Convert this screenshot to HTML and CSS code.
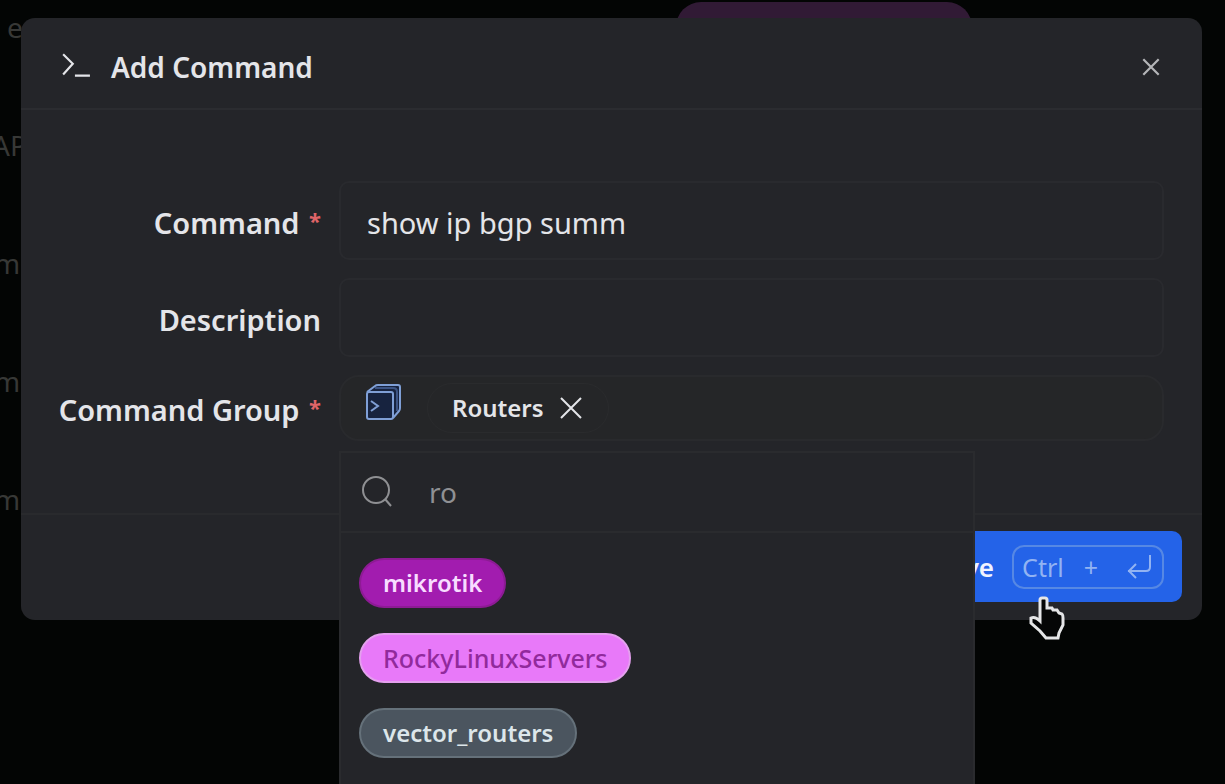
FILE: index.html
```html
<!DOCTYPE html>
<html lang="en">
<head>
<meta charset="utf-8">
<title>Add Command</title>
<link rel="stylesheet" href="styles.css">
</head>
<body>
<div class="backdrop" aria-hidden="true">
  <div class="backdrop-row"><span class="backdrop-text first">e</span><span class="backdrop-pill"></span></div>
  <div class="backdrop-row"><span class="backdrop-text api">AP</span></div>
  <div class="backdrop-row"><span class="backdrop-text">m</span></div>
  <div class="backdrop-row"><span class="backdrop-text">m</span></div>
  <div class="backdrop-row"><span class="backdrop-text">m</span></div>
</div>

<form class="modal" role="dialog" aria-labelledby="title">
  <header class="modal-header">
    <svg class="prompt-icon" viewBox="0 0 28 26" aria-hidden="true"><path d="M2 1l9 9-9 10M13 21h14"/></svg>
    <h1 class="modal-title" id="title">Add Command</h1>
    <button class="icon-button close" type="button" aria-label="Close">
      <svg class="close-icon" viewBox="0 0 20 20" aria-hidden="true"><path d="M3 3l14 14M17 3L3 17"/></svg>
    </button>
  </header>

  <div class="modal-body">
    <label class="label" for="command">Command <span class="required">*</span></label>
    <input class="input" id="command" type="text" value="show ip bgp summ">

    <label class="label" for="description">Description</label>
    <input class="input" id="description" type="text">

    <label class="label" for="search">Command Group <span class="required">*</span></label>
    <div class="group-field">
      <svg class="group-icon" viewBox="0 0 36 38" aria-hidden="true">
        <path class="group-back" d="M2 9l8-6q1-1 3-1h20q2 0 2 2v21q0 2-1 3l-6 7"/>
        <rect class="group-front" x="2" y="9" width="26" height="27" rx="2"/>
        <path class="group-edge" d="M10 5h18q4 0 4 4v19"/>
        <path d="M6 18l7 5-7 5"/>
      </svg>
      <span class="chip">Routers
        <button class="icon-button" type="button" aria-label="Remove Routers">
          <svg class="remove-icon" viewBox="0 0 22 22" aria-hidden="true"><path d="M1 1l20 20M21 1L1 21"/></svg>
        </button>
      </span>
      <div class="dropdown">
        <div class="search">
          <svg class="search-icon" viewBox="0 0 32 32" aria-hidden="true"><circle cx="15" cy="14" r="13"/><path d="M24 23l6 7"/></svg>
          <input class="search-input" id="search" type="text" value="ro">
        </div>
        <div class="options">
          <button class="option mikrotik" type="button">mikrotik</button>
          <button class="option rocky" type="button">RockyLinuxServers</button>
          <button class="option vector" type="button">vector_routers</button>
        </div>
      </div>
    </div>
  </div>

  <footer class="modal-footer">
    <button class="save" type="submit">Save
      <kbd class="shortcut"><span>Ctrl</span><span>+</span>
        <svg class="enter-icon" viewBox="0 0 26 26" aria-hidden="true"><path d="M24 1v12q0 4-4 4H2M10 10l-7 7 7 7"/></svg>
      </kbd>
    </button>
  </footer>
</form>

<svg class="cursor" viewBox="0 0 36 44" aria-hidden="true"><path d="M11 4q0-2 2-2h3q2 0 2 2v8h5l1 2h4l2 3 3 1q1 1 1 4v7l-4 8-1 5H17L11 35 2 27v-5q4-2 9 3z"/></svg>
</body>
</html>
```

FILE: styles.css
```css
* {
  box-sizing: border-box;
}

body {
  margin: 0;
  min-height: 100vh;
  padding: 18px 23px 0 21px;
  overflow: hidden;
  background: #030504;
  color: #e4e5e9;
  font: 28px/40px "Noto Sans", sans-serif;
}

button,
input,
kbd {
  margin: 0;
  font: inherit;
  color: inherit;
}

svg {
  display: block;
  flex: none;
  fill: none;
  stroke: currentColor;
  stroke-width: 2;
}

.backdrop {
  position: absolute;
  inset: -32px 0 auto 0;
  overflow: hidden;
  color: #373836;
}

.backdrop-row {
  display: flex;
  align-items: center;
  height: 118px;
}

.backdrop-text {
  width: 682px;
  margin-left: -6px;
}

.backdrop-text.first {
  padding-left: 13px;
}

.backdrop-text.api {
  margin-left: -8px;
}

.backdrop-pill {
  width: 296px;
  height: 50px;
  border-radius: 25px;
  background: #311a35;
}

.modal {
  position: relative;
  border-radius: 14px;
  background: #242529;
}

.modal-header {
  display: flex;
  align-items: center;
  gap: 20px;
  height: 92px;
  padding: 8px 40px 0;
  border-bottom: 2px solid #2b2c30;
}

.prompt-icon {
  width: 30px;
  height: 28px;
}

.modal-title {
  flex: 1;
  margin: 0;
  font-size: 28px;
  font-weight: 600;
}

.icon-button {
  padding: 0;
  border: 0;
  background: none;
}

.close {
  color: #b4b5b8;
}

.close-icon {
  width: 22px;
  height: 22px;
}

.modal-body {
  display: grid;
  grid-template-columns: 263px 1fr;
  gap: 18px;
  align-items: center;
  padding: 71px 38px 72px 37px;
}

.label {
  padding-top: 4px;
  font-size: 29px;
  font-weight: 600;
  text-align: right;
  white-space: nowrap;
}

.required {
  margin-left: 2px;
  color: #e06468;
  font-size: 22px;
  font-weight: 700;
  line-height: 20px;
  vertical-align: 5px;
}

.input {
  width: 100%;
  height: 79px;
  padding: 4px 26px 0;
  border: 2px solid #292a2e;
  border-radius: 10px;
  background: none;
  font-size: 29px;
}

.group-field {
  position: relative;
  display: flex;
  align-items: center;
  gap: 26px;
  height: 66px;
  padding: 0 24px;
  border: 2px solid #292a2d;
  border-radius: 20px;
  background: #252628;
}

.group-icon {
  align-self: flex-start;
  width: 36px;
  height: 38px;
  margin-top: 6px;
  color: #7f9fd6;
}

.group-back,
.group-front {
  fill: #17233f;
}

.group-edge {
  stroke: #3d5585;
}

.chip {
  display: flex;
  align-items: center;
  gap: 16px;
  height: 50px;
  padding: 0 26px 0 24px;
  border: 1px solid #2a2b2d;
  border-radius: 25px;
  font-size: 24px;
  font-weight: 600;
}

.remove-icon {
  width: 22px;
  height: 22px;
}

.dropdown {
  position: absolute;
  top: 74px;
  left: -2px;
  z-index: 2;
  width: 636px;
  min-height: 360px;
  border: 2px solid #2a2b2e;
  background: #242529;
}

.search {
  display: flex;
  align-items: center;
  gap: 36px;
  height: 80px;
  padding: 0 20px;
  border-bottom: 2px solid #2a2b2e;
  color: #8f9093;
}

.search-icon {
  width: 32px;
  height: 32px;
}

.search-input {
  flex: 1;
  padding: 0;
  border: 0;
  outline: 0;
  background: none;
}

.options {
  display: flex;
  flex-direction: column;
  align-items: flex-start;
  gap: 25px;
  padding: 25px 18px;
}

.option {
  height: 50px;
  padding: 0 22px;
  border: 2px solid;
  border-radius: 25px;
  font-size: 24px;
  line-height: 46px;
}

.mikrotik {
  border-color: #8d1b94;
  background: #a21caf;
  color: #f8dcff;
  font-weight: 600;
}

.rocky {
  border-color: #e4a0ee;
  background: #e879f9;
  color: #912a9c;
  font-size: 25px;
  font-weight: 500;
}

.vector {
  border-color: #65717a;
  background: #4b555f;
  color: #dce6ea;
  font-weight: 600;
}

.modal-footer {
  display: flex;
  justify-content: flex-end;
  padding: 16px 20px 18px;
  border-top: 2px solid #292a2d;
}

.save {
  display: flex;
  align-items: center;
  gap: 18px;
  height: 71px;
  padding: 0 18px 0 24px;
  border: 0;
  border-radius: 10px;
  background: #2463e8;
  color: #f0f4ff;
  font-size: 26px;
  font-weight: 600;
}

.shortcut {
  display: flex;
  align-items: center;
  gap: 20px;
  height: 44px;
  padding: 0 10px 0 8px;
  border: 2px solid #5688e4;
  border-radius: 12px;
  color: #92b3f2;
  font-size: 25px;
  font-weight: 400;
}

.enter-icon {
  width: 26px;
  height: 26px;
  margin-left: 8px;
}

.cursor {
  position: absolute;
  top: 596px;
  left: 1029px;
  z-index: 3;
  width: 36px;
  height: 44px;
  color: #e5e6e7;
  fill: #050606;
  stroke-width: 3;
}
```
